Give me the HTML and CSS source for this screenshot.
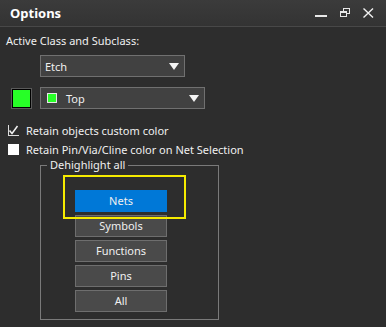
FILE: index.html
```html
<!DOCTYPE html>
<html>
  <head>
    <meta charset="utf-8" />
    <title>Options</title>
    <link rel="stylesheet" href="styles.css">
  </head>
  <body>
    <div class="panel">
      <div class="titlebar">
        <span class="title">Options</span>
        <div class="wincontrols">
          <svg width="13" height="10" viewBox="0 0 13 10"><rect x="0" y="7" width="12" height="2" fill="#e8e8e8"/></svg>
          <svg width="11" height="10" viewBox="0 0 11 10"><rect x="3.5" y="0.5" width="6" height="5" fill="none" stroke="#e8e8e8"/><rect x="0.5" y="3.5" width="6" height="5" fill="#353535" stroke="#e8e8e8"/><rect x="1" y="4" width="5" height="1" fill="#e8e8e8"/></svg>
          <svg width="11" height="10" viewBox="0 0 11 10"><path d="M0.5 0.5 L10 9.5 M10 0.5 L0.5 9.5" stroke="#f0f0f0" stroke-width="1.4"/></svg>
        </div>
      </div>

      <div class="content">
        <div class="label">Active Class and Subclass:</div>

        <div class="row class-row">
          <div class="select select-class">
            <span>Etch</span>
            <span class="arrow"></span>
          </div>
        </div>

        <div class="row sub-row">
          <span class="swatch"></span>
          <div class="select select-sub">
            <span class="mini-swatch"></span>
            <span>Top</span>
            <span class="arrow"></span>
          </div>
        </div>

        <div class="check">
          <span class="box checked">
            <svg width="11" height="11" viewBox="0 0 11 11"><path d="M1.5 5.5 L4 8.5 L9.5 1" fill="none" stroke="#f2f2f2" stroke-width="1.5"/></svg>
          </span>
          <span>Retain objects custom color</span>
        </div>
        <div class="check">
          <span class="box"></span>
          <span>Retain Pin/Via/Cline color on Net Selection</span>
        </div>

        <div class="group">
          <span class="legend">Dehighlight all</span>
          <div class="buttons">
            <div class="btn active">Nets</div>
            <div class="btn">Symbols</div>
            <div class="btn">Functions</div>
            <div class="btn">Pins</div>
            <div class="btn">All</div>
          </div>
          <div class="highlight"></div>
        </div>
      </div>
    </div>
  </body>
</html>
```

FILE: styles.css
```css
html,
body {
  margin: 0;
  padding: 0;
  background: #2d2d2d;
}

body,
* {
  font-family: "Noto Sans", "DejaVu Sans", sans-serif;
  font-size: 11px;
  color: #f0f0f0;
  box-sizing: border-box;
}

.panel {
  width: 386px;
  height: 327px;
  background: #2d2d2d;
}

.titlebar {
  height: 27px;
  display: flex;
  align-items: center;
  justify-content: space-between;
  padding: 0 12px 0 10px;
  background: linear-gradient(#3b3b3b, #333333);
  border-bottom: 1px solid #484848;
}

.title {
  font-weight: bold;
  font-size: 13px;
  color: #ffffff;
  margin-top: -1px;
}

.wincontrols {
  display: flex;
  gap: 12px;
  align-items: center;
  margin-top: -1px;
}

.wincontrols svg {
  display: block;
}

.content {
  padding: 6px 0 0 6px;
}

.label {
  height: 16px;
  line-height: 16px;
}

.row {
  display: flex;
  align-items: center;
}

.class-row {
  margin-top: 6px;
  padding-left: 34px;
}

.sub-row {
  margin-top: 10px;
  padding-left: 6px;
  gap: 9px;
}

.select {
  height: 22px;
  display: flex;
  align-items: center;
  background: #414141;
  border: 1px solid #707070;
  padding: 0 0 0 4px;
  position: relative;
}

.select-class {
  width: 145px;
}

.select-sub {
  width: 165px;
  padding-left: 6px;
}

.arrow {
  position: absolute;
  top: 7px;
  right: 5px;
  width: 0;
  height: 0;
  border-left: 5px solid transparent;
  border-right: 5px solid transparent;
  border-top: 7px solid #f4f4f4;
}

.swatch {
  width: 19px;
  height: 19px;
  background: #27ff27;
  border: 1px solid #000000;
  outline: 1px solid #5a5a5a;
}

.mini-swatch {
  width: 10px;
  height: 10px;
  background: #27ff27;
  border: 1px solid #e6e6e6;
  margin-right: 9px;
}

.check {
  display: flex;
  align-items: center;
  gap: 7px;
  padding-left: 2px;
  height: 19px;
}

.sub-row + .check {
  margin-top: 12px;
}

.box {
  width: 11px;
  height: 11px;
  background: #ffffff;
  display: block;
}

.box.checked {
  background: #2d2d2d;
  border-left: 1px solid #dcdcdc;
  border-bottom: 1px solid #dcdcdc;
  position: relative;
}

.box.checked svg {
  position: absolute;
  left: -1px;
  top: 0;
}

.group {
  position: relative;
  margin: 6px 0 0 34px;
  width: 179px;
  height: 155px;
  border: 1px solid #7a7a7a;
}

.legend {
  position: absolute;
  top: -9px;
  left: 6px;
  padding: 0 3px;
  background: #2d2d2d;
  line-height: 16px;
}

.buttons {
  display: flex;
  flex-direction: column;
  gap: 3px;
  padding: 24px 0 0 34px;
}

.btn {
  width: 92px;
  height: 22px;
  line-height: 20px;
  text-align: center;
  background: #4a4a4a;
  border: 1px solid #6e6e6e;
}

.btn.active {
  background: #0078d7;
  border-color: #0078d7;
}

.highlight {
  position: absolute;
  left: 22px;
  top: 9px;
  width: 123px;
  height: 44px;
  border: 2px solid #f5eb00;
}
```
